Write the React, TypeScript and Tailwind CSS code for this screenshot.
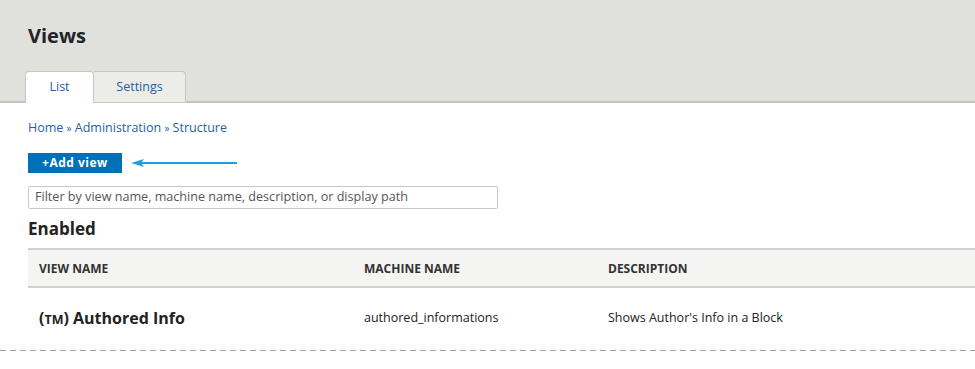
import React from 'react';

const font = 'font-["Open_Sans","Liberation_Sans",sans-serif]';

const Arrow: React.FC = () => (
  <svg width="108" height="10" viewBox="0 0 108 10" className="ml-[9px]">
    <line x1="8" y1="5" x2="106" y2="5" stroke="#1a9fe0" strokeWidth="2" />
    <path d="M0 5 L13 1 L10 5 L13 9 Z" fill="#1a9fe0" />
  </svg>
);

const App: React.FC = () => {
  return (
    <div className={`${font} w-[975px] h-[369px] overflow-hidden bg-white text-[#222330]`}>
      <div className="h-[103px] bg-[#e0e0dc] border-b-2 border-[#c6c6c1] flex flex-col">
        <h1 className="pl-[28px] pt-[22px] text-[20px] leading-[28px] font-bold text-[#232429]">Views</h1>
        <div className="mt-auto pl-[25px] flex -mb-[2px]">
          <div className="w-[69px] h-[32px] bg-white border border-b-0 border-[#c6c6c1] rounded-t-[4px] flex items-center justify-center text-[12.5px] text-[#1f5fa3]">
            List
          </div>
          <div className="w-[92px] h-[31px] bg-[#ecece9] border border-l-0 border-b-0 border-[#c6c6c1] rounded-tr-[4px] flex items-center justify-center text-[12.5px] text-[#1f5fa3]">
            Settings
          </div>
        </div>
      </div>

      <div className="pl-[28px]">
        <div className="pt-[17px] text-[12.5px] leading-[16px] text-[#1f5fa3]">
          Home <span className="text-[10px]">»</span> Administration <span className="text-[10px]">»</span> Structure
        </div>

        <div className="mt-[17px] flex items-center">
          <div className="w-[94px] h-[20px] bg-[#0071b8] text-white text-[12px] font-bold flex items-center justify-center tracking-[0.5px]">
            +Add view
          </div>
          <Arrow />
        </div>

        <div className="mt-[13px] w-[470px] h-[23px] border border-[#c8c8c8] rounded-[2px] flex items-center px-[6px] text-[12.6px] text-[#555]">
          Filter by view name, machine name, description, or display path
        </div>

        <h2 className="mt-[8px] text-[17px] leading-[24px] font-bold text-[#222]">Enabled</h2>

        <div className="mt-[7px]">
          <div className="h-[40px] bg-[#f4f4f2] border-y-2 border-[#d2d2cf] flex items-center text-[12px] font-bold text-[#333] uppercase">
            <div className="w-[336px] pl-[11px] pt-[2px]">View name</div>
            <div className="w-[244px] pt-[2px]">Machine name</div>
            <div className="flex-1 pt-[2px]">Description</div>
          </div>
          <div className="h-[62px] flex items-center pb-[2px]">
            <div className="w-[336px] pl-[11px] text-[16px] font-bold text-[#222]">
              (<span className="text-[12.5px]">TM</span>) Authored Info
            </div>
            <div className="w-[244px] text-[12.5px] text-[#222]">authored_informations</div>
            <div className="flex-1 text-[12.5px] text-[#222]">Shows Author's Info in a Block</div>
          </div>
        </div>
      </div>
      <div className="h-px bg-[repeating-linear-gradient(to_right,#a0a0a0_0,#a0a0a0_6px,transparent_6px,transparent_10px)]" />
    </div>
  );
};

export default App;
